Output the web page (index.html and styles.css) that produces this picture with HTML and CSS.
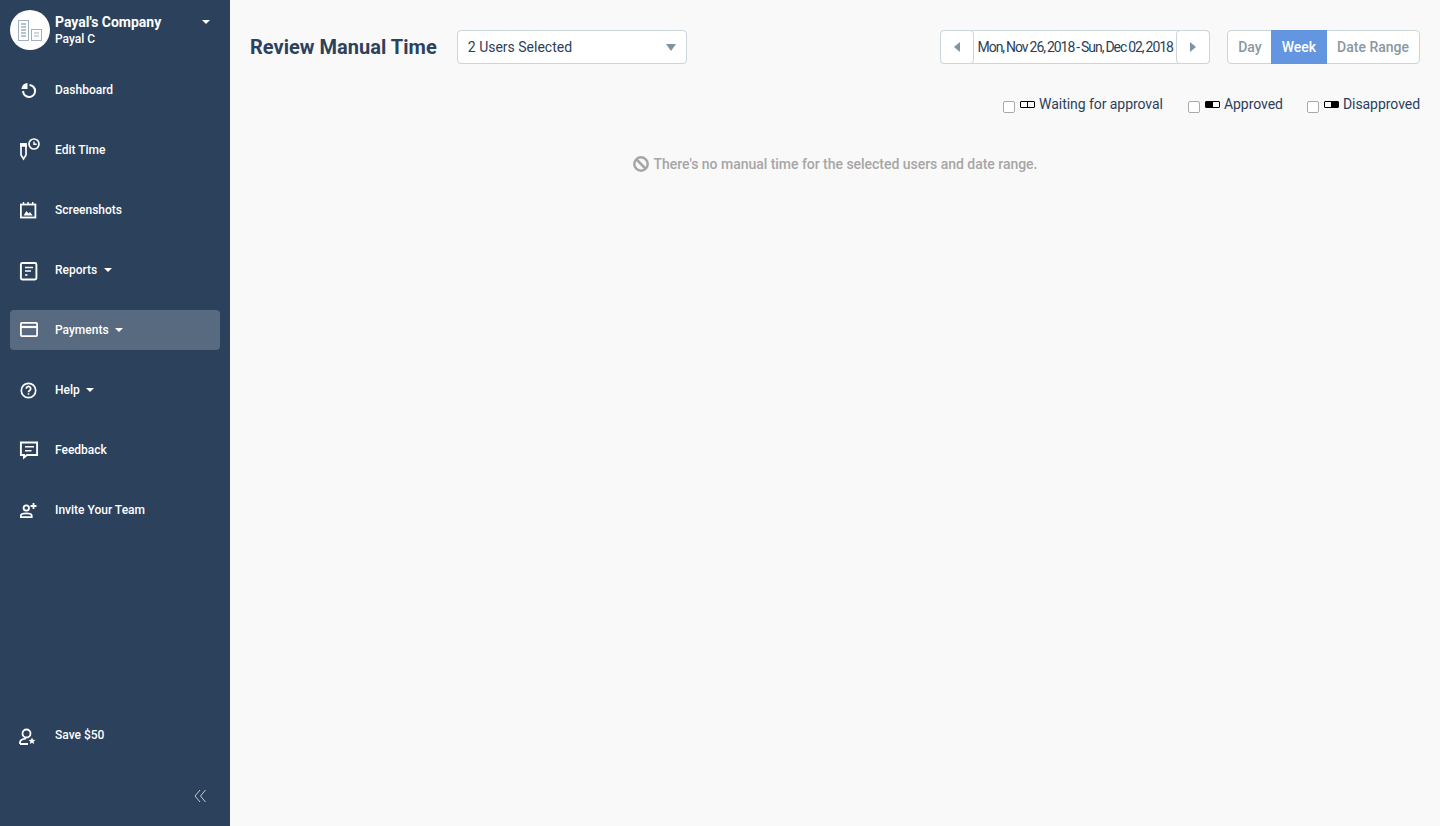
FILE: index.html
```html
<!DOCTYPE html>
<html lang="en">
<head>
  <meta charset="UTF-8" />
  <meta name="viewport" content="width=device-width, initial-scale=1.0" />
  <title>Review Manual Time</title>
  <link rel="stylesheet" href="styles.css">
</head>
<body>
  <div class="layout">
    <aside class="sidebar">
      <div class="account">
        <div class="avatar">
          <svg width="24" height="21" viewBox="0 0 24 21" fill="none" stroke="#9fb0c0" stroke-width="1">
            <rect x="0.5" y="0.5" width="10" height="20" />
            <path d="M3 4h5M3 7h5M3 10h5M3 13h5M3 16h5" stroke-width="1.500" />
            <rect x="13.500" y="9.500" width="10" height="11" />
            <path d="M16 13h5M16 16h5" stroke-width="1.200" />
          </svg>
        </div>
        <div class="account-text">
          <div class="company">Payal's Company</div>
          <div class="user">Payal C</div>
        </div>
        <span class="caret account-caret"></span>
      </div>

      <nav class="nav">
        <a class="nav-item">
          <svg class="nav-icon" viewBox="0 0 20 20" fill="none" stroke="#fff" stroke-width="2">
            <path d="M10.500 5a6 6 0 1 1-6.400 6" />
            <path d="M8.500 3v6h-6a6 6 0 0 1 6-6z" fill="#fff" stroke="none" />
          </svg>
          <span>Dashboard</span>
        </a>
        <a class="nav-item">
          <svg class="nav-icon" viewBox="0 0 20 20" fill="none" stroke="#fff" stroke-width="1.700">
            <path d="M2 4h5v11l-2.500 4-2.500-4z" />
            <path d="M2 4h5v2H2z" fill="#fff" />
            <circle cx="15" cy="4" r="5" />
            <path d="M15 1.500v2.700h2.700" stroke-width="1.400" />
          </svg>
          <span>Edit Time</span>
        </a>
        <a class="nav-item">
          <svg class="nav-icon" viewBox="0 0 20 20" fill="none" stroke="#fff" stroke-width="1.800">
            <rect x="1.900" y="4.500" width="14.500" height="13" />
            <path d="M4.500 2v3M9.100 2v3M13.700 2v3" stroke-width="1.400" />
            <path d="M4.500 15.500l3-4.500 2 2.500 1.500-1.500 2.700 3.500z" fill="#fff" stroke="none" />
          </svg>
          <span>Screenshots</span>
        </a>
        <a class="nav-item has-menu">
          <svg class="nav-icon" viewBox="0 0 20 20" fill="none" stroke="#fff" stroke-width="1.900">
            <rect x="1.900" y="3" width="15.500" height="16.500" rx="1.500" />
            <path d="M6 7.500h8M6 11h6M6 15h2.500" stroke-width="1.600" />
          </svg>
          <span>Reports</span>
          <span class="caret"></span>
        </a>
        <a class="nav-item has-menu active">
          <svg class="nav-icon" viewBox="0 0 20 20" fill="none" stroke="#fff" stroke-width="1.800">
            <rect x="1.900" y="2.900" width="16.200" height="13.200" rx="1" />
            <path d="M1.900 7h16.200" stroke-width="2.200" />
          </svg>
          <span>Payments</span>
          <span class="caret"></span>
        </a>
        <a class="nav-item has-menu">
          <svg class="nav-icon" viewBox="0 0 20 20" fill="none" stroke="#fff" stroke-width="1.700">
            <circle cx="9.500" cy="10.500" r="7.200" />
            <path d="M7.300 8.700a2.200 2.200 0 1 1 3.400 1.800c-.8.500-1.200 1-1.200 1.800" />
            <path d="M9.500 13.300v1.400" />
          </svg>
          <span>Help</span>
          <span class="caret"></span>
        </a>
        <a class="nav-item">
          <svg class="nav-icon" viewBox="0 0 20 20" fill="none" stroke="#fff" stroke-width="1.900">
            <path d="M1.900 2.500h16.200v12.500H8l-3 2.500V15H1.900z" />
            <path d="M6 6.800h9M6 10.800h6.500" stroke-width="1.600" />
          </svg>
          <span>Feedback</span>
        </a>
        <a class="nav-item">
          <svg class="nav-icon" viewBox="0 0 20 20" fill="none" stroke="#fff" stroke-width="1.800">
            <circle cx="7.300" cy="8" r="2.700" />
            <path d="M1.900 17.100v-1.600c0-1.300 2.700-2.100 5.400-2.100s5.400.8 5.400 2.100v1.600z" />
            <path d="M14.500 3v6M11.500 6h6" />
          </svg>
          <span>Invite Your Team</span>
        </a>
      </nav>

      <a class="nav-item save">
        <svg class="nav-icon" viewBox="0 0 20 20" fill="none" stroke="#fff" stroke-width="1.800">
          <circle cx="7.500" cy="8.500" r="4" />
          <path d="M1 19v-1.500c0-2.300 2.500-3.700 6-3.900M1 19h8" />
          <path d="M13 12.500l1 2.300 2.500.2-1.900 1.600.6 2.400-2.200-1.300-2.200 1.300.6-2.400-1.900-1.600 2.500-.2z" fill="#fff" stroke="none" />
        </svg>
        <span>Save $50</span>
      </a>

      <div class="collapse">
        <svg width="12" height="14" viewBox="0 0 12 14" fill="none" stroke="#c4ccd5" stroke-width="1">
          <path d="M6 1L1 7l5 6M11.500 1l-5 6 5 6" />
        </svg>
      </div>
    </aside>

    <main class="main">
      <div class="toolbar">
        <h1>Review Manual Time</h1>
        <div class="user-select">
          <span>2 Users Selected</span>
          <span class="select-arrow"></span>
        </div>
        <div class="date-nav">
          <button class="date-btn"><span class="tri tri-left"></span></button>
          <div class="date-label">Mon, Nov 26, 2018 - Sun, Dec 02, 2018</div>
          <button class="date-btn"><span class="tri tri-right"></span></button>
        </div>
        <div class="range-tabs">
          <div class="range-tab tab-day">Day</div>
          <div class="range-tab selected">Week</div>
          <div class="range-tab tab-range">Date Range</div>
        </div>
      </div>

      <div class="legend">
        <label class="legend-item">
          <input type="checkbox" />
          <span class="pill"><i></i><i></i></span>
          Waiting for approval
        </label>
        <label class="legend-item">
          <input type="checkbox" />
          <span class="pill"><i class="on"></i><i></i></span>
          Approved
        </label>
        <label class="legend-item">
          <input type="checkbox" />
          <span class="pill"><i></i><i class="on"></i></span>
          Disapproved
        </label>
      </div>

      <p class="empty">
        <svg width="16" height="16" viewBox="0 0 16 16" fill="none" stroke="#a6a6a6" stroke-width="2.500">
          <circle cx="8" cy="8" r="6.700" />
          <path d="M3.500 3.500l9 9" />
        </svg>
        There's no manual time for the selected users and date range.
      </p>
    </main>
  </div>
</body>
</html>
```

FILE: styles.css
```css
* {
  box-sizing: border-box;
}
body {
  margin: 0;
  font-family: Roboto, sans-serif;
  background-color: #f9f9f9;
  color: #2c3e5a;
}
.layout {
  display: flex;
  min-height: 826px;
}

/* sidebar */
.sidebar {
  width: 230px;
  flex-shrink: 0;
  background-color: #2c415c;
  color: #fff;
  display: flex;
  flex-direction: column;
  height: 826px;
  padding: 10px 10px 0;
}
.account {
  display: flex;
  align-items: center;
  height: 40px;
  margin-bottom: 20px;
}
.avatar {
  width: 40px;
  height: 40px;
  border-radius: 50%;
  background: #fff;
  display: flex;
  align-items: center;
  justify-content: center;
  flex-shrink: 0;
}
.account-text {
  margin-left: 5px;
  flex: 1;
}
.company {
  font-size: 14px;
  font-weight: 700;
  line-height: 17px;
  margin-top: 1px;
}
.user {
  font-size: 12px;
  font-weight: 500;
  line-height: 16px;
}
.caret {
  display: inline-block;
  width: 0;
  height: 0;
  border-left: 4px solid transparent;
  border-right: 4px solid transparent;
  border-top: 4px solid #fff;
  margin-left: 6.5px;
}
.account-caret {
  margin: 0 10px 16px 0;
}
.nav {
  display: flex;
  flex-direction: column;
  gap: 20px;
  flex: 1;
}
.nav-item {
  display: flex;
  align-items: center;
  height: 40px;
  padding-left: 9px;
  border-radius: 4px;
  font-size: 12px;
  font-weight: 500;
  color: #fff;
}
.nav-item.active {
  background-color: #586a80;
}
.nav-icon {
  width: 20px;
  height: 20px;
  margin-right: 16px;
  flex-shrink: 0;
  overflow: visible;
}
.save {
  margin-bottom: 34px;
}
.collapse {
  display: flex;
  justify-content: flex-end;
  padding-right: 14px;
  height: 37px;
}

/* main */
.main {
  flex: 1;
  padding: 30px 20px 0;
}
.toolbar {
  display: flex;
  align-items: center;
  height: 34px;
}
h1 {
  margin: 0 20px 0 0;
  font-size: 20px;
  font-weight: 700;
  letter-spacing: 0.03px;
  color: #2c415c;
}
.user-select {
  width: 230px;
  height: 34px;
  background: #fff;
  border: 1px solid #cbd5da;
  border-radius: 4px;
  display: flex;
  align-items: center;
  justify-content: space-between;
  padding: 0 10px;
  font-size: 14px;
}
.select-arrow {
  border-left: 5px solid transparent;
  border-right: 5px solid transparent;
  border-top: 7px solid #7f93a0;
}
.date-nav {
  display: flex;
  margin-left: auto;
  height: 34px;
  background: #fff;
  border: 1px solid #cbd5da;
  border-radius: 4px;
}
.date-btn {
  width: 34px;
  margin: -1px;
  padding: 0;
  background: #fff;
  border: 1px solid #cbd5da;
  border-radius: 4px;
  display: flex;
  align-items: center;
  justify-content: center;
}
.tri {
  border-top: 5px solid transparent;
  border-bottom: 5px solid transparent;
}
.tri-left {
  border-right: 6px solid #7f93a0;
}
.tri-right {
  border-left: 6px solid #7f93a0;
}
.date-label {
  width: 204px;
  display: flex;
  align-items: center;
  justify-content: center;
  font-size: 14px;
  letter-spacing: -1.05px;
  word-spacing: -0.4px;
  white-space: nowrap;
}
.range-tabs {
  display: flex;
  height: 34px;
  margin-left: 17px;
  background: #fff;
  border: 1px solid #cbd5da;
  border-radius: 4px;
  font-size: 14px;
  font-weight: 500;
  color: #8a979f;
}
.range-tab {
  display: flex;
  align-items: center;
  padding: 0 11px;
}
.tab-day {
  padding: 0 9px 0 10px;
}
.tab-range {
  padding: 0 10px;
}
.range-tab.selected {
  margin: -1px 0;
  background-color: #6495e0;
  color: #fff;
}
.legend {
  display: flex;
  justify-content: flex-end;
  gap: 24px;
  margin-top: 30px;
  height: 20px;
  font-size: 14px;
  letter-spacing: -0.05px;
  color: #2c3e5a;
}
.legend-item {
  display: flex;
  align-items: center;
}
.legend-item:first-child {
  margin-right: 1px;
}
.legend-item input {
  appearance: none;
  width: 12px;
  height: 12px;
  margin: 5px 5px 0 0;
  background: #fff;
  border: 1px solid #a9a9a9;
  border-radius: 2px;
}
.pill {
  display: flex;
  width: 15px;
  height: 7px;
  margin-right: 4px;
  border: 1px solid #000;
  border-radius: 1px;
  overflow: hidden;
}
.pill i {
  flex: 1;
}
.pill i + i {
  border-left: 1px solid #000;
}
.pill i.on {
  background: #000;
}
.empty {
  display: flex;
  align-items: center;
  justify-content: center;
  gap: 5px;
  margin: 42px 0 0;
  font-size: 14px;
  font-weight: 500;
  letter-spacing: -0.03px;
  color: #a6a6a6;
}
```
